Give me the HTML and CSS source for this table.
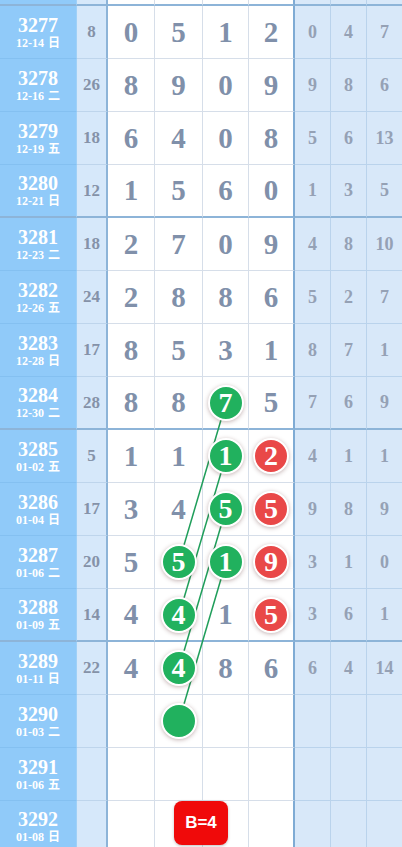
FILE: index.html
```html
<!DOCTYPE html>
<html lang="zh">
<head>
  <meta charset="UTF-8">
  <title>走势图</title>
  <link rel="stylesheet" href="styles.css">
</head>
<body>

<div class="chart">
  <div class="row ghost end">
    <div class="cell issue"></div><div class="cell sum"></div>
    <div class="cell num"></div><div class="cell num"></div><div class="cell num"></div><div class="cell num last"></div>
    <div class="cell miss"></div><div class="cell miss"></div><div class="cell miss"></div>
  </div>

  <div class="row">
    <div class="cell issue"><b>3277</b><span>12-14 <em>日</em></span></div><div class="cell sum">8</div>
    <div class="cell num">0</div><div class="cell num">5</div><div class="cell num">1</div><div class="cell num last">2</div>
    <div class="cell miss">0</div><div class="cell miss">4</div><div class="cell miss">7</div>
  </div>
  <div class="row">
    <div class="cell issue"><b>3278</b><span>12-16 <em>二</em></span></div><div class="cell sum">26</div>
    <div class="cell num">8</div><div class="cell num">9</div><div class="cell num">0</div><div class="cell num last">9</div>
    <div class="cell miss">9</div><div class="cell miss">8</div><div class="cell miss">6</div>
  </div>
  <div class="row">
    <div class="cell issue"><b>3279</b><span>12-19 <em>五</em></span></div><div class="cell sum">18</div>
    <div class="cell num">6</div><div class="cell num">4</div><div class="cell num">0</div><div class="cell num last">8</div>
    <div class="cell miss">5</div><div class="cell miss">6</div><div class="cell miss">13</div>
  </div>
  <div class="row end">
    <div class="cell issue"><b>3280</b><span>12-21 <em>日</em></span></div><div class="cell sum">12</div>
    <div class="cell num">1</div><div class="cell num">5</div><div class="cell num">6</div><div class="cell num last">0</div>
    <div class="cell miss">1</div><div class="cell miss">3</div><div class="cell miss">5</div>
  </div>

  <div class="row">
    <div class="cell issue"><b>3281</b><span>12-23 <em>二</em></span></div><div class="cell sum">18</div>
    <div class="cell num">2</div><div class="cell num">7</div><div class="cell num">0</div><div class="cell num last">9</div>
    <div class="cell miss">4</div><div class="cell miss">8</div><div class="cell miss">10</div>
  </div>
  <div class="row">
    <div class="cell issue"><b>3282</b><span>12-26 <em>五</em></span></div><div class="cell sum">24</div>
    <div class="cell num">2</div><div class="cell num">8</div><div class="cell num">8</div><div class="cell num last">6</div>
    <div class="cell miss">5</div><div class="cell miss">2</div><div class="cell miss">7</div>
  </div>
  <div class="row">
    <div class="cell issue"><b>3283</b><span>12-28 <em>日</em></span></div><div class="cell sum">17</div>
    <div class="cell num">8</div><div class="cell num">5</div><div class="cell num">3</div><div class="cell num last">1</div>
    <div class="cell miss">8</div><div class="cell miss">7</div><div class="cell miss">1</div>
  </div>
  <div class="row end">
    <div class="cell issue"><b>3284</b><span>12-30 <em>二</em></span></div><div class="cell sum">28</div>
    <div class="cell num">8</div><div class="cell num">8</div><div class="cell num"><i class="ball">7</i></div><div class="cell num last">5</div>
    <div class="cell miss">7</div><div class="cell miss">6</div><div class="cell miss">9</div>
  </div>

  <div class="row">
    <div class="cell issue"><b>3285</b><span>01-02 <em>五</em></span></div><div class="cell sum">5</div>
    <div class="cell num">1</div><div class="cell num">1</div><div class="cell num"><i class="ball">1</i></div><div class="cell num last"><i class="ball red">2</i></div>
    <div class="cell miss">4</div><div class="cell miss">1</div><div class="cell miss">1</div>
  </div>
  <div class="row">
    <div class="cell issue"><b>3286</b><span>01-04 <em>日</em></span></div><div class="cell sum">17</div>
    <div class="cell num">3</div><div class="cell num">4</div><div class="cell num"><i class="ball">5</i></div><div class="cell num last"><i class="ball red">5</i></div>
    <div class="cell miss">9</div><div class="cell miss">8</div><div class="cell miss">9</div>
  </div>
  <div class="row">
    <div class="cell issue"><b>3287</b><span>01-06 <em>二</em></span></div><div class="cell sum">20</div>
    <div class="cell num">5</div><div class="cell num"><i class="ball">5</i></div><div class="cell num"><i class="ball">1</i></div><div class="cell num last"><i class="ball red">9</i></div>
    <div class="cell miss">3</div><div class="cell miss">1</div><div class="cell miss">0</div>
  </div>
  <div class="row end">
    <div class="cell issue"><b>3288</b><span>01-09 <em>五</em></span></div><div class="cell sum">14</div>
    <div class="cell num">4</div><div class="cell num"><i class="ball">4</i></div><div class="cell num">1</div><div class="cell num last"><i class="ball red">5</i></div>
    <div class="cell miss">3</div><div class="cell miss">6</div><div class="cell miss">1</div>
  </div>

  <div class="row">
    <div class="cell issue"><b>3289</b><span>01-11 <em>日</em></span></div><div class="cell sum">22</div>
    <div class="cell num">4</div><div class="cell num"><i class="ball">4</i></div><div class="cell num">8</div><div class="cell num last">6</div>
    <div class="cell miss">6</div><div class="cell miss">4</div><div class="cell miss">14</div>
  </div>
  <div class="row">
    <div class="cell issue"><b>3290</b><span>01-03 <em>二</em></span></div><div class="cell sum"></div>
    <div class="cell num"></div><div class="cell num"><i class="ball"></i></div><div class="cell num"></div><div class="cell num last"></div>
    <div class="cell miss"></div><div class="cell miss"></div><div class="cell miss"></div>
  </div>
  <div class="row">
    <div class="cell issue"><b>3291</b><span>01-06 <em>五</em></span></div><div class="cell sum"></div>
    <div class="cell num"></div><div class="cell num"></div><div class="cell num"></div><div class="cell num last"></div>
    <div class="cell miss"></div><div class="cell miss"></div><div class="cell miss"></div>
  </div>
  <div class="row end">
    <div class="cell issue"><b>3292</b><span>01-08 <em>日</em></span></div><div class="cell sum"></div>
    <div class="cell num"></div><div class="cell num"></div><div class="cell num"></div><div class="cell num last"></div>
    <div class="cell miss"></div><div class="cell miss"></div><div class="cell miss"></div>
  </div>

  <!-- trend lines between the green balls -->
  <svg class="trend" width="402" height="847" viewBox="0 0 402 847">
    <line x1="226" y1="403" x2="179" y2="562" />
    <line x1="226" y1="456" x2="179" y2="615" />
    <line x1="226" y1="509" x2="179" y2="668" />
    <line x1="226" y1="562" x2="179" y2="721" />
  </svg>

  <div class="badge">B=4</div>
</div>

</body>
</html>
```

FILE: styles.css
```css
body {
  margin: 0;
  background: #fff;
  font-family: 'Liberation Serif', 'Noto Sans CJK SC', serif;
  overflow: hidden;
}

.chart {
  position: relative;
  width: 402px;
}

.row {
  display: grid;
  grid-template-columns: 77px 31px 47px 48px 46px 46px 36px 36px 35px;
  height: 53px;
}

.row.ghost {
  height: 6px;
}

.cell {
  box-sizing: border-box;
  display: flex;
  flex-direction: column;
  justify-content: center;
  align-items: center;
  font-weight: bold;
  border-right: 1px solid #d6dee9;
  border-bottom: 1px solid #d6dee9;
}

.row.end .cell {
  border-bottom: 2px solid #8db4d8;
}

/* issue + date */
.issue {
  background: #90caf9;
  color: #fff;
  border-right-color: #9fd0f7;
  border-bottom-color: #84c0f1;
}

.issue b {
  font-size: 20px;
  line-height: 20px;
  margin-top: 1px;
}

.issue span {
  font-size: 12px;
  line-height: 16px;
}

.issue em {
  font-style: normal;
  margin-left: 1px;
}

/* sum column */
.sum {
  background: #d6e8fa;
  color: #8592a8;
  font-size: 17px;
  border-right: 2px solid #8db4d8;
  border-bottom-color: #bed5ec;
}

/* drawn digits */
.num {
  color: #8090aa;
  font-size: 29px;
}

.num.last {
  border-right: 2px solid #7fabd4;
}

/* missing counts */
.miss {
  background: #d8e8f9;
  color: #95a1b5;
  font-size: 18px;
  border-right-color: #bad3ec;
  border-bottom-color: #bad3ec;
}

.miss:last-child {
  border-right: none;
}

.ball {
  position: relative;
  z-index: 2;
  box-sizing: border-box;
  width: 36px;
  height: 36px;
  border-radius: 50%;
  border: 2px solid #fff;
  background: #21b15e;
  color: #fff;
  font-style: normal;
  font-size: 28px;
  line-height: 32px;
  text-align: center;
  box-shadow: 0 1px 4px rgba(90, 40, 40, 0.35);
}

.ball.red {
  background: #e94848;
}

.trend {
  position: absolute;
  top: 0;
  left: 0;
  z-index: 1;
}

.trend line {
  stroke: #1f9e5a;
  stroke-width: 1.5;
}

.badge {
  position: absolute;
  z-index: 3;
  left: 174px;
  top: 801px;
  width: 54px;
  height: 44px;
  border-radius: 8px;
  background: #f00a0a;
  color: #fff;
  font-family: 'Liberation Sans', Arial, sans-serif;
  font-size: 17px;
  font-weight: bold;
  line-height: 44px;
  text-align: center;
  box-shadow: 0 1px 3px rgba(0, 0, 0, 0.25);
}
```
